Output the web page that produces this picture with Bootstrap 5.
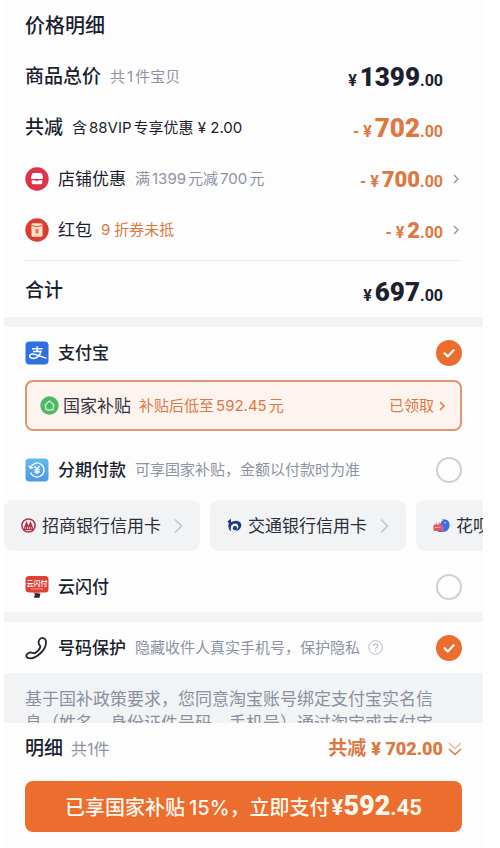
<!DOCTYPE html>
<html lang="zh-CN">
<head>
<meta charset="utf-8">
<meta name="viewport" content="width=device-width, initial-scale=1">
<title>价格明细</title>
<link href="https://cdn.jsdelivr.net/npm/bootstrap@5.3.0/dist/css/bootstrap.min.css" rel="stylesheet">
<style>
:root{--ink:#1b1f2e;--soft:#8d93a3;--brand:#ec6d2d;--brand-ink:#dc7841;--fill:#f2f3f5}
body{font-family:Inter,"Noto Sans CJK SC",sans-serif;color:var(--ink);background:#fff;font-size:17px;line-height:24px}
.sheet{margin:0 17px 0 4px;background:#fdfdfd}
.gutter{padding-left:21px;padding-right:21px}
.line{min-height:51px}
.t20{font-size:20px;font-weight:500}
.t19{font-size:19px;font-weight:500}
.t16{font-size:16px}
.t15{font-size:15px}
.medium{font-weight:500}
.soft{color:var(--soft)}
.accent{color:var(--brand-ink)}
.name{margin-left:9px}
.note{margin-left:9px}
.num{margin:0 2px}
.price{font-family:Roboto,"Noto Sans CJK SC",sans-serif;font-weight:700;font-size:16px;line-height:32px;padding-top:5px;margin-right:19px;white-space:nowrap}
.price b{font-size:26px;margin-left:3px}
.price.mid b{font-size:22px}
.price.arrowed{margin-right:9px}
.rule{border-top:1px solid #ececef;margin-top:5px}
.total{min-height:57px}
.band{height:10px;background:var(--fill)}
.pick.form-check-input{width:26px;height:26px;margin:0;border:2px solid #cdcfd8;border-radius:50%;background-color:#fdfdfd;box-shadow:none}
.pick.form-check-input:checked{border-color:var(--brand);background-color:var(--brand);background-size:26px;background-position:center;background-image:url("data:image/svg+xml,%3Csvg xmlns='http://www.w3.org/2000/svg' viewBox='0 0 26 26'%3E%3Cpath d='M8.5 13.2l3.3 3.2 5.8-6.2' fill='none' stroke='%23fff' stroke-width='2.2' stroke-linecap='round' stroke-linejoin='round'/%3E%3C/svg%3E")}
.subsidy{min-height:51px;margin-top:2px;border:2px solid #e0966e;border-radius:8px;background:#fdf4f0;padding:0 14px 0 13px;color:#333540}
.after{margin-top:13px}
.chips{gap:10px;margin-top:5px;margin-bottom:10px;overflow-x:auto;scrollbar-width:none}
.chips::-webkit-scrollbar{display:none}
.chip{border:0;background:var(--fill);border-radius:9px;min-height:51px;padding:0 17px;gap:6px;color:#2b2e38;white-space:nowrap}
.chip .go{margin-left:7px}
.terms{background:var(--fill);max-height:50px;overflow:hidden;padding:14px 38px 0 21px;color:#8a90a0;line-height:24px}
.pay{background:var(--brand);color:#fff8ee;border:0;border-radius:8px;min-height:51px;font-size:20px;font-weight:500;margin-top:7px;margin-bottom:16px;padding:0}
.pay:hover,.pay:active{background:var(--brand)!important;color:#fff8ee!important}
.pay .sum{font-family:Roboto,sans-serif;font-weight:700;font-size:22px;margin-left:2px}
.pay .sum b{font-size:27px}
.saved{font-weight:700;color:var(--brand-ink);gap:5px}
.saved .what{font-size:19px}
.saved b{font-family:Roboto,sans-serif;font-size:18px}
a{color:inherit;text-decoration:none}
a:hover{color:inherit}
svg{flex:none;display:block}
</style>
<script src="https://cdn.jsdelivr.net/npm/bootstrap@5.3.0/dist/js/bootstrap.bundle.min.js"></script>
</head>
<body>
<main class="sheet">
  <section class="gutter">
    <div class="line d-flex align-items-center"><h1 class="t20 m-0">价格明细</h1></div>
    <div class="line d-flex align-items-center">
      <span class="t19">商品总价</span><span class="t15 soft note">共<span class="num">1</span>件宝贝</span>
      <span class="price ms-auto">¥<b>1399</b>.00</span>
    </div>
    <div class="line d-flex align-items-center">
      <span class="t19">共减</span><span class="t15 note">含<span class="num">88VIP</span>专享优惠 ¥ 2.00</span>
      <span class="price accent ms-auto">- ¥<b>702</b>.00</span>
    </div>
    <a href="#" class="line d-flex align-items-center">
      <svg width="24" height="24" viewBox="0 0 24 24"><circle cx="12" cy="12" r="11.7" fill="#df3348"/><path d="M8.500 6h7q1.200 0 1.600 1.300l.9 3.400q0 1.300-1.200 1.300H7.200Q6 12 6 10.700l.9-3.400Q7.300 6 8.500 6z" fill="#fff"/><path d="M6.700 13.300h2.800q2.500 1.200 5 0h2.800v2.500q0 1.500-1.500 1.500H8.200q-1.500 0-1.500-1.500z" fill="#fff"/></svg>
      <span class="name">店铺优惠</span><span class="t15 soft note">满<span class="num">1399</span>元减<span class="num">700</span>元</span>
      <span class="price mid arrowed accent ms-auto">- ¥<b>700</b>.00</span>
      <svg width="10" height="12" viewBox="0 0 10 12"><path d="M2 2l4 4-4 4" fill="none" stroke="#8f939e" stroke-width="1.300"/></svg>
    </a>
    <a href="#" class="line d-flex align-items-center">
      <svg width="24" height="24" viewBox="0 0 24 24"><circle cx="12" cy="12" r="11.700" fill="#dc3c32"/><rect x="6.500" y="5.300" width="11" height="13.400" rx="1.500" fill="#fbe3c4"/><path d="M6.500 7.500q5.500 2.200 11 0" stroke="#dc3c32" fill="none" stroke-width=".9"/><path d="M10.500 10.800l1.500 1.900 1.500-1.900M12 12.700v2.800M10.500 12.800h3M10.500 14.200h3" stroke="#dc3c32" fill="none" stroke-width=".9"/></svg>
      <span class="name">红包</span><span class="t15 accent note"><span class="me-1">9</span>折券未抵</span>
      <span class="price mid arrowed accent ms-auto">- ¥<b>2</b>.00</span>
      <svg width="10" height="12" viewBox="0 0 10 12"><path d="M2 2l4 4-4 4" fill="none" stroke="#8f939e" stroke-width="1.300"/></svg>
    </a>
    <div class="rule total d-flex align-items-center pt-1">
      <span class="t19">合计</span><span class="price ms-auto">¥<b>697</b>.00</span>
    </div>
  </section>

  <div class="band"></div>

  <section>
    <div class="gutter">
      <div class="line d-flex align-items-center">
        <svg width="24" height="24" viewBox="0 0 24 24"><rect x=".5" y=".5" width="23" height="23" rx="4" fill="#306fe0"/><path d="M7 7.700h10.500M12.200 5.200v5M8 10.500h8c-1.200 4-4.200 6.900-7.800 6.900-2.300 0-3.500-.9-3.500-2.300 0-1.600 1.600-2.400 3.500-2.100 3.500.5 7.500 2.600 13.300 4.400" fill="none" stroke="#fff" stroke-width="1.500"/></svg>
        <label class="medium name" for="alipay">支付宝</label>
        <input class="form-check-input pick ms-auto" type="radio" name="method" id="alipay" checked>
      </div>
      <a href="#" class="subsidy d-flex align-items-center">
        <svg width="19" height="19" viewBox="0 0 19 19"><circle cx="9.500" cy="9.500" r="9.200" fill="#4fb765"/><path d="M5 9.300l4.500-4.400L14 9.300M5.600 8.700v3q0 2.300 2.300 2.300h3.200q2.300 0 2.300-2.300v-3M8 14h3" fill="none" stroke="#c7f5c9" stroke-width="1.300" stroke-linecap="round" stroke-linejoin="round"/></svg>
        <span class="ms-1">国家补贴</span><span class="t15 accent ms-2">补贴后低至<span class="num">592.45</span>元</span>
        <span class="t15 accent ms-auto">已领取</span>
        <svg class="ms-1" width="8" height="12" viewBox="0 0 8 12"><path d="M2 2l4 4-4 4" fill="none" stroke="#dc7841" stroke-width="1.500"/></svg>
      </a>
      <div class="line after d-flex align-items-center">
        <svg width="24" height="24" viewBox="0 0 24 24"><defs><linearGradient id="sky" x2="0" y2="1"><stop stop-color="#62b9ee"/><stop offset="1" stop-color="#4c9ae4"/></linearGradient></defs><rect x=".5" y=".5" width="23" height="23" rx="4" fill="url(#sky)"/><path d="M5.500 9.500A7 7 0 1 1 5.500 14.500M3.800 7.500l1.600 3 3-1.200M9.500 8l2.500 3.300L14.500 8M12 11.300v5M9.200 11.800h5.600M9.200 14h5.600" fill="none" stroke="#fff" stroke-width="1.300"/></svg>
        <label class="medium name" for="instal">分期付款</label><span class="t15 soft note">可享国家补贴，金额以付款时为准</span>
        <input class="form-check-input pick ms-auto" type="radio" name="method" id="instal">
      </div>
    </div>
    <div class="chips d-flex">
      <button type="button" class="chip d-flex align-items-center flex-shrink-0">
        <svg width="15" height="15" viewBox="0 0 15 15"><circle cx="7.500" cy="7.500" r="6.600" fill="none" stroke="#b23349" stroke-width="1.500"/><path d="M3.200 10.800l2.300-6 2 4.500 2-4.500 2.300 6M5.500 5v6M9.500 5v6M2.500 11.500h10" fill="none" stroke="#b23349" stroke-width="1.300"/></svg>
        <span>招商银行信用卡</span>
        <svg class="go" width="9" height="16" viewBox="0 0 9 16"><path d="M1 1.500L7.500 8 1 14.500" fill="none" stroke="#c3c5cb" stroke-width="1.700"/></svg>
      </button>
      <button type="button" class="chip d-flex align-items-center flex-shrink-0">
        <svg width="15" height="15" viewBox="0 0 15 15"><path d="M.5 3.200L4 .8v3.500Q7 2.200 10.500 3c3 .8 4.300 3 3.700 5.300-.8 3-3 4.700-6.200 5.200 2.400-1.500 3.600-3.700 3.300-5.500C10.900 5.600 8.500 4.700 6 6c-2.400 1.300-2.800 4.500-1.800 7.500C1.500 11.800.8 8.500 1.800 5.200z" fill="#1c3c78"/><circle cx="8" cy="10.200" r="2.100" fill="#1c3c78"/></svg>
        <span>交通银行信用卡</span>
        <svg class="go" width="9" height="16" viewBox="0 0 9 16"><path d="M1 1.500L7.500 8 1 14.500" fill="none" stroke="#c3c5cb" stroke-width="1.700"/></svg>
      </button>
      <button type="button" class="chip d-flex align-items-center flex-shrink-0">
        <svg width="17" height="15" viewBox="0 0 17 15"><path d="M7.500 5.500Q8 3 9.800 2.300L9.300.7l1.900.9Q14 1 15.600 3.500q1.800 3 .4 6.500-1.700 3.800-6.500 4H5V7z" fill="#3d6de0"/><path d="M3.500 6.500V4.500M6.500 6.500V4.200" fill="none" stroke="#e88a92" stroke-width="1.200"/><rect x=".5" y="6.500" width="9" height="6.500" rx="1.200" fill="#e4545e"/><path d="M9 7q2 3 .5 6.500" fill="none" stroke="#a978d0"/><path d="M2 9.300h5.500" stroke="#f6b6b8"/><circle cx="12" cy="4.800" r=".7" fill="#fff"/></svg>
        <span>花呗</span>
      </button>
    </div>
    <div class="gutter line d-flex align-items-center">
      <svg width="24" height="24" viewBox="0 0 24 24"><rect x=".5" y="1" width="23" height="16.500" rx="3.500" fill="#dc4036"/><text x="12" y="10.700" text-anchor="middle" font-size="7" font-weight="500" fill="#fff">云闪付</text><path d="M6 13.800h12" stroke="#f1a29a" stroke-width="1.300" stroke-dasharray="1.500 .6"/><path d="M8 17.500h7l-2 1.500H9.500z" fill="#dc4036"/><path d="M10 18.500h5.500l-1 4.200H9z" fill="#2b2d38"/></svg>
      <label class="name medium" for="quick">云闪付</label>
      <input class="form-check-input pick ms-auto" type="radio" name="method" id="quick">
    </div>
  </section>

  <div class="band"></div>

  <section>
    <div class="gutter line d-flex align-items-center">
      <svg width="24" height="24" viewBox="0 0 24 24"><path d="M14.800 3.200C16.800 1.200 20 1.700 20.700 4.300c1 4.200-1 8.700-4.500 12.200-3.600 3.600-8.300 6.300-12.200 5.700-2.500-.4-3.300-2.700-2-4.100 1.300-1.200 3.300-1.800 4.900-1.500 1.300.2 1.800 1.100 3 .5 2.300-1.200 4.700-3.800 5.400-6 .3-1.200-1-1.700-1.400-3-.5-1.700-.2-3.800.9-4.900z" fill="none" stroke="#23252f" stroke-width="1.800"/></svg>
      <label class="medium name" for="shield">号码保护</label><span class="t15 soft note">隐藏收件人真实手机号，保护隐私</span>
      <button type="button" class="btn p-0 border-0 ms-2" aria-label="说明"><svg width="15" height="15" viewBox="0 0 15 15"><circle cx="7.500" cy="7.500" r="6.800" fill="none" stroke="#b9bcc5"/><path d="M5.300 6q.2-2.200 2.200-2.200T9.700 5.700q0 1-1.200 1.700-1 .6-1 1.600M7.500 10.200v1.300" fill="none" stroke="#b0b3bd" stroke-width="1.100"/></svg></button>
      <input class="form-check-input pick ms-auto" type="checkbox" id="shield" checked>
    </div>
    <p class="terms m-0">基于国补政策要求，您同意淘宝账号绑定支付宝实名信息（姓名、身份证件号码、手机号）通过淘宝或支付宝</p>
  </section>

  <footer class="gutter">
    <div class="line d-flex align-items-center">
      <span class="t19">明细</span><span class="t16 soft ms-2">共1件</span>
      <a href="#" class="saved ms-auto d-flex align-items-center"><span class="what">共减</span><b>¥ 702.00</b>
        <svg width="14" height="16" viewBox="0 0 14 16"><path d="M1 2l6 5.500L13 2" fill="none" stroke="#efb895" stroke-width="1.400"/><path d="M1 8l6 5.500L13 8" fill="none" stroke="#dc7841" stroke-width="1.400"/></svg></a>
    </div>
    <button type="button" class="btn pay w-100">已享国家补贴<span class="ms-1">15%</span>，立即支付<span class="sum">¥<b>592</b>.45</span></button>
  </footer>
</main>
</body>
</html>
